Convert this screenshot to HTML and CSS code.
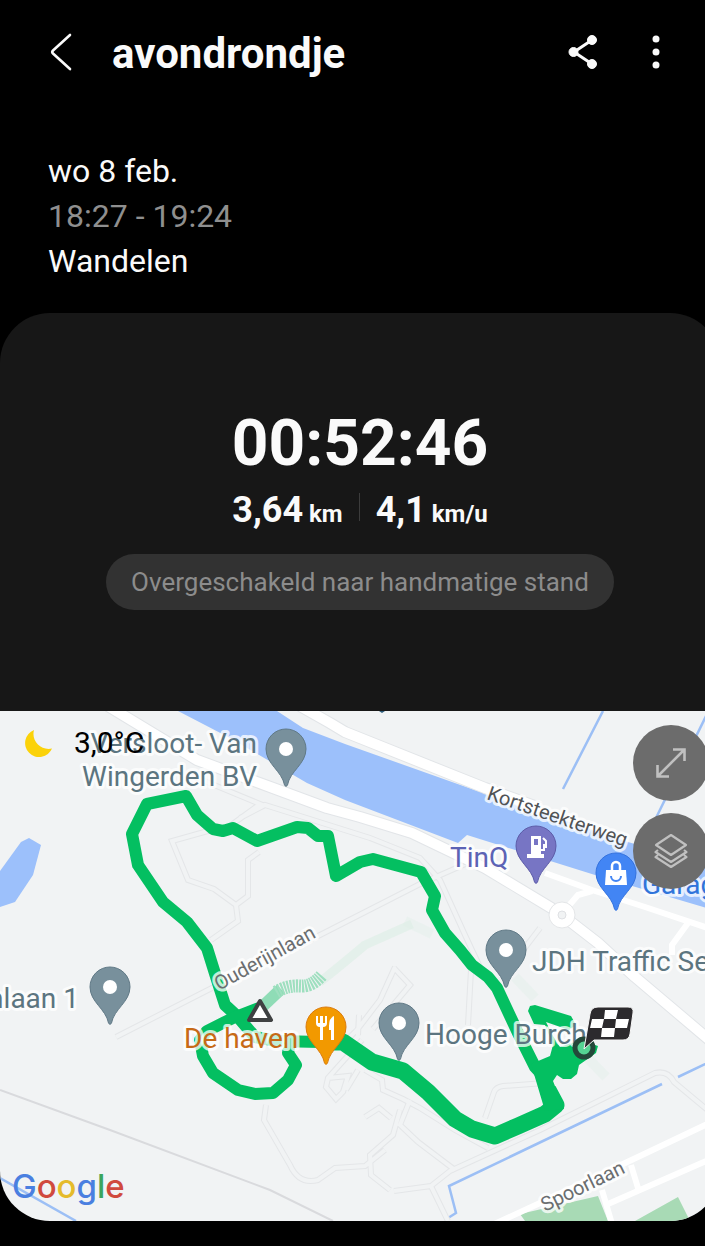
FILE: index.html
```
<!DOCTYPE html>
<html lang="nl">
<head>
<meta charset="utf-8">
<meta name="viewport" content="width=device-width, initial-scale=1">
<title>avondrondje</title>
<link rel="stylesheet" href="styles.css">
</head>
<body>
<div class="app">
  <header class="topbar">
    <button class="icon-button" type="button" aria-label="Terug">
      <svg width="28" height="40" viewBox="0 0 28 40" fill="none" stroke="#fafafa" stroke-width="2.6" stroke-linecap="round" stroke-linejoin="round"><path d="M24 3 7 18.500Q5.500 20 7 21.500L24 37"/></svg>
    </button>
    <h1 class="title">avondrondje</h1>
    <button class="icon-button" type="button" aria-label="Delen">
      <svg width="32" height="36" viewBox="0 0 32 36" fill="#fafafa" stroke="#fafafa"><path d="M25 6 7 18 25 30" fill="none" stroke-width="3"/><circle cx="25" cy="6" r="4.500"/><circle cx="6.500" cy="18" r="4.500"/><circle cx="25" cy="30" r="4.500"/></svg>
    </button>
    <button class="icon-button" type="button" aria-label="Meer opties">
      <svg width="8" height="36" viewBox="0 0 8 36" fill="#fafafa"><circle cx="4" cy="5" r="3.500"/><circle cx="4" cy="18" r="3.500"/><circle cx="4" cy="31" r="3.500"/></svg>
    </button>
  </header>

  <section class="info">
    <p>wo 8 feb.</p>
    <p class="muted">18:27 - 19:24</p>
    <p>Wandelen</p>
  </section>

  <main class="card">
    <section class="summary">
      <p class="timer">00:52:46</p>
      <div class="stats">
        <p class="stat">3,64<span class="unit"> km</span></p>
        <span class="divider"></span>
        <p class="stat">4,1<span class="unit"> km/u</span></p>
      </div>
      <p class="chip">Overgeschakeld naar handmatige stand</p>
    </section>

    <section class="map" aria-label="Kaart">
      <svg class="map-canvas" viewBox="0 711 720 510">
        <defs>
          <path id="pin" d="M0-20A20 20 0 0 1 20 0C20 15 4 22 1.500 36Q0 39-1.500 36C-4 22-20 15-20 0A20 20 0 0 1 0-20Z"/>
          <g id="lanes">
            <path d="M116 1037 208 990 320 935 420 884 470 862"/>
            <path d="M223 831 260 804 190 775M240 818 265 805 370 838 420 858 440 880 465 935 480 967"/>
            <path d="M215 829 172 841 188 880 214 889 236 905 238 921 211 940M236 905 248 896 248 860 259 852"/>
            <path d="M448 1221 431 1186 450 1171 540 1130 655 1073Q668 1070 674 1082L710 1112M431 1186 394 1191"/>
            <path d="M485 1118 494 1092Q496 1087 503 1086L545 1083M488 1148 455 1130 420 1108 403 1099 383 1090 382 1080 365 1070"/>
            <path d="M345 1042 357 1030 380 1000 395 967M358 1035 359 1015M373 1029 410 985 394 968M346 1090 358 1070M468 1025 471 970M362 1040 328 1078 326 1087 336 1099 343 1092 348 1076 328 1078"/>
            <path d="M266 1105 264 1120 290 1165Q299 1185 318 1180L335 1168 365 1166 385 1150M400 1110 393 1135 370 1155 371 1175 390 1190M410 1100 400 1125 418 1142 455 1170M365 1117 379 1108 391 1118"/>
            <path d="M505 974 540 928"/>
          </g>
        </defs>

        <rect x="0" y="711" width="720" height="510" fill="#f1f3f4"/>
        <path fill="#9cc0fb" d="M178 711H277L303 728 345 744 483 793 628 842 720 869V912L595 875 467 835 458 843 345 800 307 783 230 738Z"/>
        <path fill="#9cc0fb" d="M0 871 21 842 29 838 41 845 33 875 15 902 0 907Z"/>
        <g fill="none" stroke="#9cbff5" stroke-width="2.500">
          <path d="M603 711 563 789M707 714 655 820M448 1218 456 1213 449 1186 662 1084M678 1077 720 1057M0 1178 76 1221"/>
        </g>
        <path fill="#a8dab5" d="M525 1221 520 1214 598 1196 608 1221ZM635 1221 678 1197 690 1221Z"/>
        <path d="M0 1090 110 1130 270 1190 333 1221" fill="none" stroke="#d9dadd" stroke-width="2"/>
        <path d="M379 711H385L382 713Z" fill="#2a5a78"/>
        <use href="#lanes" fill="none" stroke="#e4e6e8" stroke-width="6"/>
        <use href="#lanes" fill="none" stroke="#f1f3f4" stroke-width="4"/>

        <g class="roads-edge">
          <path d="M108 706 197 760 273 788 327 808 360 817 412 833 485 868 558 912 598 943 635 977 720 1049"/>
          <path d="M300 706 330 723 345 732 485 788 540 808"/>
        </g>
        <g class="roads">
          <path d="M108 706 197 760 273 788 327 808 360 817 412 833 485 868 558 912 598 943 635 977 720 1049"/>
          <path d="M300 706 330 723 345 732 485 788 540 808"/>
        </g>
        <g fill="none" stroke="#fff" stroke-width="6">
          <path d="M545 873 592 890 645 907 720 932M566 909 578 895 592 891M688 923 672 945V955"/>
          <path d="M490 1226 540 1203 640 1156 720 1118M602 1190 612 1224M608 1204 720 1155M631 1165 638 1188"/>
        </g>
        <circle cx="562" cy="915" r="13" fill="#fff" stroke="#e4e6e8"/>
        <circle cx="562" cy="915" r="4" fill="#f1f3f4" stroke="#dfe1e4"/>

        <path d="M405 921 432 934M515 977 535 998M575 1045 606 1077" fill="none" stroke="#dceee4" stroke-width="10" opacity=".3"/>
        <path d="M320 982Q345 962 365 945L412 924" fill="none" stroke="#dceee5" stroke-width="9" opacity=".6"/>
        <path d="M262 1007 281 989" fill="none" stroke="#8fdcb6" stroke-width="12"/>
        <path d="M276 992Q288 985 300 986T322 975" fill="none" stroke="#9edfbf" stroke-width="13" stroke-dasharray="2 1"/>

        <g fill="none" stroke="#04bf61" stroke-width="12" stroke-linejoin="round">
          <path d="M558 1107 548 1097 545 1078 535 1067 518 1033 497 988 488 977 472 965 460 950 445 933 432 910 435 896 421 872 373 859 360 862 336 876 328 836H318L308 828 297 827 257 841 233 828 223 831 213 829 197 815 186 796 147 804 132 834 138 865 163 902 187 922 207 948 217 980 225 1005 238 1017 255 1037 277 1041 320 1042"/>
          <path d="M262 1007 233 1018 207 1031 200 1040 203 1056 213 1073 238 1090 255 1094 273 1093 288 1080 296 1065 288 1053 290 1042"/>
          <path stroke-width="17" d="M320 1042H343L372 1062 403 1071 428 1092 455 1119 472 1129 495 1136 518 1126 545 1114 556 1105 548 1090"/>
        </g>
        <path fill="#04bf61" d="M528 1011 530 1006 535 1005 571 1016 576 1025 569 1030 546 1022 553 1036 560 1047 580 1040 598 1046 596 1053 579 1065 577 1074 571 1079 563 1079 557 1075 553 1081 564 1109 545 1111 531 1064 550 1056 553 1045 545 1025 534 1024Z"/>

        <path d="M260 1001 271 1020H249Z" fill="#fff" stroke="#3f4142" stroke-width="4" stroke-linejoin="round"/>

        <g class="place">
          <text x="257" y="753" text-anchor="end">Versloot- Van</text>
          <text x="257" y="786" text-anchor="end">Wingerden BV</text>
          <text x="79" y="1008" text-anchor="end">nlaan 1</text>
          <text x="532" y="971">JDH Traffic Se</text>
          <text x="425" y="1044">Hooge Burch</text>
          <text class="fuel" x="450" y="867">TinQ</text>
          <text class="shop" x="642" y="894">Garage</text>
          <text class="food" x="184" y="1048">De haven</text>
        </g>
        <g class="street">
          <text class="street-dark" transform="translate(486 799) rotate(19)">Kortsteekterweg</text>
          <text transform="translate(219 991) rotate(-29)">Ouderijnlaan</text>
          <text transform="translate(545 1212) rotate(-26)">Spoorlaan</text>
        </g>

        <g fill="#78909c" stroke="#607986">
          <use href="#pin" x="286" y="749"/><use href="#pin" x="110" y="987"/><use href="#pin" x="506" y="950"/><use href="#pin" x="399" y="1023"/>
        </g>
        <g fill="#fff"><circle cx="286" cy="749" r="7"/><circle cx="110" cy="987" r="7"/><circle cx="506" cy="950" r="7"/><circle cx="399" cy="1023" r="7"/></g>

        <g transform="translate(536 846)">
          <use href="#pin" fill="#7775c4" stroke="#5c5ba8"/>
          <path fill="#fff" fill-rule="evenodd" d="M-5-10H5V8H8V12H-9V8H-5ZM-2-7V-1H2V-7Z"/>
          <path d="M5 4H8V-2M7-8 10-5V1H7" fill="none" stroke="#fff" stroke-width="2"/>
        </g>
        <g transform="translate(616 873)">
          <use href="#pin" fill="#4285f4" stroke="#3472de"/>
          <path d="M-10-3H10L11 12H-11Z" fill="#fff"/>
          <path d="M-4-3V-7A4 4 0 0 1 4-7V-3" fill="none" stroke="#fff" stroke-width="2.500"/>
          <path d="M-5 3A5 5 0 0 0 5 3" fill="none" stroke="#4285f4" stroke-width="2"/>
        </g>
        <g transform="translate(326 1027)">
          <use href="#pin" fill="#f29900" stroke="#db7c0e"/>
          <path d="M-10-11V-4Q-10 0-6 0V13H-3V0Q1 0 1-4V-11H-1V-4H-3V-11H-6V-4H-8V-11ZM8-11Q3-9 3-1V3H5V13H8Z" fill="#fff"/>
        </g>

        <circle cx="584" cy="1048" r="9" fill="#55d493" stroke="#24483a" stroke-width="5"/>
        <path d="M584 1049 590 1014Q591 1007 598 1007H628Q634 1007 633 1013L630 1034Q629 1040 623 1040H594Z" fill="#2c2a2d" stroke="#f6f6f6" stroke-width="1"/>
        <path fill="#fff" d="M605 1010H618L616 1019H604ZM592 1019H604L602 1028H590ZM616 1019H629L627 1028H615ZM602 1028H615L614 1037H601Z"/>

        <text class="brand" x="12" y="1198"><tspan fill="#4a7fe0">G</tspan><tspan fill="#d04a3e">o</tspan><tspan fill="#e5bb2b">o</tspan><tspan fill="#4a7fe0">g</tspan><tspan fill="#3ba55c">l</tspan><tspan fill="#d04a3e">e</tspan></text>
      </svg>

      <p class="weather">
        <svg width="30" height="30" viewBox="0 0 30 30"><path d="M10 2A14 14 0 1 0 28 20.500C17 23 7 13 10 2Z" fill="#fbd20a"/></svg>
        <span>3,0°C</span>
      </p>
      <div class="map-tools">
        <button class="round-button" type="button" aria-label="Vergroten">
          <svg width="36" height="36" viewBox="0 0 36 36" fill="none" stroke="#c0c0c0" stroke-width="2.600"><path d="M5 31 31 5M20 4.500H31.500V16M4.500 20V31.500H16"/></svg>
        </button>
        <button class="round-button" type="button" aria-label="Kaartlagen">
          <svg width="36" height="36" viewBox="0 0 36 36" fill="none" stroke="#c0c0c0" stroke-width="2.200" stroke-linejoin="round"><path d="M18 2 33 12 18 22 3 12ZM5 17 2.500 19 18 29 33.500 19 31 17M5 22 2.500 24 18 34 33.500 24 31 22"/></svg>
        </button>
      </div>
    </section>
  </main>
</div>
</body>
</html>
```
FILE: styles.css
```
* { box-sizing: border-box; }
body {
  margin: 0;
  background: #000;
  color: #fafafa;
  font-family: Roboto, "Liberation Sans", sans-serif;
}
h1, p { margin: 0; }
button {
  padding: 0;
  border: 0;
  background: none;
  cursor: pointer;
}
svg { display: block; }

.app {
  overflow: hidden;
  padding-bottom: 25px;
}

.topbar {
  display: flex;
  align-items: center;
  gap: 32px;
  height: 104px;
  padding: 0 40px;
}
.icon-button {
  display: flex;
  align-items: center;
  justify-content: center;
  min-width: 40px;
  height: 48px;
}
.title {
  flex: 1;
  padding-top: 4px;
  font-size: 42px;
  line-height: 48px;
  font-weight: 700;
}
.topbar .icon-button:last-child {
  min-width: 18px;
  margin-left: 12px;
}

.info {
  padding: 45px 48px 29px;
  font-size: 32px;
  line-height: 45px;
}
.muted { color: #8f8f8f; }

/* The card runs past the right edge of the window */
.card {
  margin-right: -15px;
  border-radius: 50px;
  overflow: hidden;
  background: #171717;
}
.summary {
  display: flex;
  flex-direction: column;
  align-items: center;
  padding: 93px 24px 101px;
}
.timer {
  font-size: 64px;
  line-height: 76px;
  font-weight: 700;
}
.stats {
  display: flex;
  align-items: center;
  gap: 16px;
  margin: 6px 0 22px;
}
.stat {
  font-size: 36px;
  line-height: 44px;
  font-weight: 700;
}
.unit {
  font-size: 24px;
  line-height: 24px;
}
.divider {
  width: 1px;
  height: 28px;
  margin-bottom: 6px;
  background: #3c3c3c;
}
.chip {
  padding: 0 25px;
  border-radius: 28px;
  background: #323232;
  color: #8c8c8c;
  font-size: 26px;
  line-height: 56px;
}

.map { position: relative; }
.map-canvas {
  width: 100%;
  height: auto;
}
.roads-edge, .roads {
  fill: none;
  stroke: #fff;
  stroke-width: 10px;
  stroke-linejoin: round;
}
.roads-edge {
  stroke: #e2e5e8;
  stroke-width: 12px;
}
.place, .street {
  fill: #5c7580;
  stroke: #fff;
  stroke-width: 6px;
  stroke-opacity: .75;
  stroke-linejoin: round;
  paint-order: stroke;
  font-size: 28px;
}
.street {
  fill: #6b6e70;
  font-size: 20px;
}
.street-dark { fill: #505356; }
.fuel { fill: #5c63b5; }
.shop { fill: #2f74da; }
.food { fill: #c76a16; }
.brand {
  font-family: Inter, sans-serif;
  font-size: 33px;
  font-weight: 500;
}
.weather {
  position: absolute;
  top: 14px;
  left: 24px;
  display: flex;
  align-items: center;
  gap: 20px;
  color: #000;
  font-size: 30px;
  line-height: 36px;
}
.map-tools {
  position: absolute;
  top: 14px;
  right: 11px;
  display: grid;
  gap: 12px;
}
.round-button {
  display: grid;
  place-items: center;
  width: 76px;
  height: 76px;
  border-radius: 50%;
  background: #6c6c6c;
}
```
